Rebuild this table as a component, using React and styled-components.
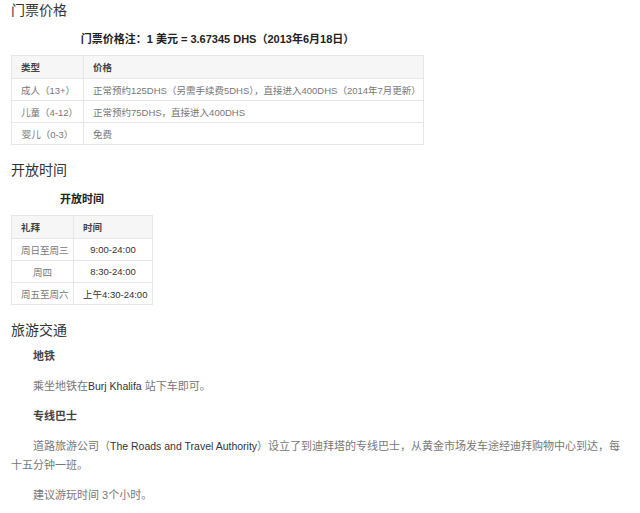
import React from 'react'
import styled, { createGlobalStyle } from 'styled-components';

const GlobalStyle = createGlobalStyle`
	body {
		margin: 0;
		background: #fff;
		font-family: "Liberation Sans", Arial, "Noto Sans CJK SC", sans-serif;
		font-size: 11px;
		color: #666;
	}
`;

const Page = styled.div`
	width: 614px;
	padding: 0 0 0 11px;
`;

const SectionTitle = styled.h2`
	margin: ${props => props.first ? '0' : '15px'} 0 0 0;
	font-family: "Noto Sans CJK SC", "Liberation Sans", sans-serif;
	font-size: 14px;
	line-height: 18px;
	font-weight: 400;
	color: #333;
`;

const Block = styled.div`
	display: flex;
	flex-direction: column;
	align-items: center;
	width: ${props => props.width}px;
`;

const Caption = styled.div`
	margin-top: 13px;
	margin-bottom: 8px;
	line-height: 16px;
	font-size: 11px;
	font-weight: 700;
	color: #222;
	font-family: "Liberation Sans", "Noto Sans CJK SC", sans-serif;
`;

const Table = styled.table`
	width: 100%;
	border-collapse: collapse;
	table-layout: fixed;
	font-size: 9.5px;
`;

const Th = styled.th`
	box-sizing: border-box;
	height: 23px;
	padding: 0 9px;
	border: 1px solid #e6e6e6;
	background: #f6f6f6;
	text-align: left;
	font-weight: 700;
	color: #444;
	width: ${props => props.width ? props.width + 'px' : 'auto'};
`;

const Td = styled.td`
	box-sizing: border-box;
	height: 22px;
	padding: 0 9px;
	border: 1px solid #e6e6e6;
	text-align: ${props => props.align || 'left'};
	color: ${props => props.dark ? '#333' : '#777'};
	white-space: nowrap;
`;

const Para = styled.p`
	margin: 0 0 11px 0;
	line-height: 19px;
	text-indent: 22px;
	color: ${props => props.bold ? '#444' : '#777'};
	font-weight: ${props => props.bold ? 700 : 400};
	&:first-of-type {
		margin-top: 9px;
	}
`;

const Latin = styled.span`
	color: #333;
	font-size: 10.5px;
`;

const prices = [
	['成人（13+）', '正常预约125DHS（另需手续费5DHS），直接进入400DHS（2014年7月更新）'],
	['儿童（4-12）', '正常预约75DHS，直接进入400DHS'],
	['婴儿（0-3）', '免费'],
];

const hours = [
	['周日至周三', '9:00-24:00'],
	['周四', '8:30-24:00'],
	['周五至周六', '上午4:30-24:00'],
];

const App = () => {
	return (
		<Page>
			<GlobalStyle />
			<SectionTitle first>门票价格</SectionTitle>
			<Block width={413}>
				<Caption>门票价格注：1 美元 = 3.67345 DHS（2013年6月18日）</Caption>
				<Table>
					<thead>
						<tr>
							<Th width={72}>类型</Th>
							<Th>价格</Th>
						</tr>
					</thead>
					<tbody>
						{prices.map(([type, price]) => (
							<tr key={type}>
								<Td align="center">{type}</Td>
								<Td>{price}</Td>
							</tr>
						))}
					</tbody>
				</Table>
			</Block>

			<SectionTitle>开放时间</SectionTitle>
			<Block width={142}>
				<Caption>开放时间</Caption>
				<Table>
					<thead>
						<tr>
							<Th width={62}>礼拜</Th>
							<Th>时间</Th>
						</tr>
					</thead>
					<tbody>
						{hours.map(([day, time]) => (
							<tr key={day}>
								<Td align="center">{day}</Td>
								<Td align="center" dark>{time}</Td>
							</tr>
						))}
					</tbody>
				</Table>
			</Block>

			<SectionTitle>旅游交通</SectionTitle>
			<Para bold>地铁</Para>
			<Para>乘坐地铁在<Latin>Burj Khalifa</Latin> 站下车即可。</Para>
			<Para bold>专线巴士</Para>
			<Para>道路旅游公司（<Latin>The Roads and Travel Authority</Latin>）设立了到迪拜塔的专线巴士，从黄金市场发车途经迪拜购物中心到达，每十五分钟一班。</Para>
			<Para>建议游玩时间 3个小时。</Para>
		</Page>
	)
}

export default App;
